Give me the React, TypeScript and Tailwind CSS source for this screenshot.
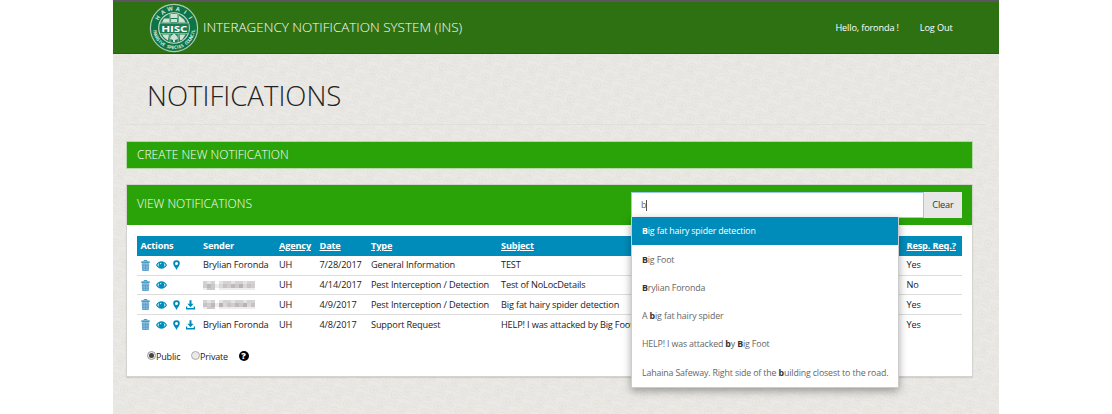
import React from "react";

const BLUE = "#008cba";

function Swirls() {
  return (
    <svg className="absolute inset-0 h-full w-full" aria-hidden="true">
      <defs>
        <pattern id="swirl" width="22" height="20" patternUnits="userSpaceOnUse" patternTransform="rotate(14)">
          <g fill="none" stroke="#e0ded8" strokeWidth="0.8">
            <circle cx="6" cy="5" r="1.300" />
            <circle cx="6" cy="5" r="3.900" />
            <circle cx="17" cy="15" r="1.300" />
            <circle cx="17" cy="15" r="3.900" />
            <path d="M11 5c2-4 7-4 11 0M0 15c3-4 7-4 11 0M11 8c3-3 7-3 11 0M0 18c3-3 7-3 11 0M11 2c3-3 7-3 11 0M0 12c3-3 7-3 11 0" />
          </g>
        </pattern>
      </defs>
      <rect width="100%" height="100%" fill="url(#swirl)" />
    </svg>
  );
}

function RingText({ text, radius, from, to, size, bottom }: { text: string; radius: number; from: number; to: number; size: number; bottom?: boolean }) {
  const step = (to - from) / (text.length - 1);
  return (
    <>
      {text.split("").map((ch, i) => {
        if (ch === " ") return null;
        const a = from + step * i;
        const rad = (a * Math.PI) / 180;
        const x = 25 + radius * Math.sin(rad);
        const y = 25 - radius * Math.cos(rad);
        return (
          <text key={i} x="0" y={size * 0.36} textAnchor="middle" fontSize={size} fontWeight="700" fill="#d5e8dc" transform={`translate(${x} ${y}) rotate(${bottom ? a - 180 : a})`}>
            {ch}
          </text>
        );
      })}
    </>
  );
}

function Logo() {
  return (
    <svg width="50" height="50" viewBox="0 0 50 50" className="shrink-0">
      <circle cx="25" cy="25" r="23.600" fill="#0e7446" stroke="#a9cdb4" strokeWidth="1.200" />
      <circle cx="25" cy="25" r="15.300" fill="#1a7b50" stroke="#c7decd" strokeWidth="1.100" />
      <g fill="#cfe3d5">
        <path d="M15 15.500h5.500v4H13zM21.500 11h7v4h-7zM22 16h6v3h-6zM30 12.500l5 4 1.500 3H30z" />
        <path d="M13 31.500h7l-1 6-4-3zM22 33l3-2.500 3 2.500 1 3-3 1v2h-2v-2l-3-1zM30.500 31.500h6l-3 5-2.500 1z" />
      </g>
      <path d="M21 11v28M29.200 11v28" stroke="#cfe3d5" strokeWidth="0.600" />
      <rect x="11" y="20" width="28.500" height="10.600" fill="#1a7b50" />
      <path d="M11 20h28.500M11 30.600h28.500" stroke="#cfe3d5" strokeWidth="0.600" />
      <text x="25.300" y="28.700" textAnchor="middle" fontSize="9.500" fontWeight="700" fill="#fff" textLength="26" lengthAdjust="spacingAndGlyphs">HISC</text>
      <RingText text="HAWAII" radius={19.400} from={-58} to={58} size={5.800} />
      <RingText text="INVASIVE SPECIES COUNCIL" radius={19.400} from={262} to={98} size={4.600} bottom />
    </svg>
  );
}

function TrashIcon() {
  return (
    <svg width="9" height="11" viewBox="0 0 9 11">
      <path d="M3 1.500V.5h3v1" fill="none" stroke="#3f93c4" strokeWidth=".9" />
      <path d="M.3 1.400h8.400v1.500H.3z" fill="#2f92c0" />
      <path d="M1 3.500h7L7.600 10.900H1.400z" fill="#a3cbe8" />
      <path d="M1.200 3.700h6.600L7.400 10.500H1.600zM2.900 4v6.500M4.500 4v6.500M6.100 4v6.500M1.300 5.800h6.400M1.400 8.200h6.200" fill="none" stroke="#3f8fc2" strokeWidth=".6" />
    </svg>
  );
}

function EyeIcon() {
  return (
    <svg width="11" height="8" viewBox="0 0 11 8">
      <path fillRule="evenodd" fill={BLUE} d="M0 4C1.400 1.500 3.300.3 5.500.3S9.600 1.500 11 4C9.600 6.500 7.700 7.700 5.500 7.700S1.400 6.500 0 4zM1.300 4c.6 1 1.500 1.800 2.400 2.200a3 3 0 0 1-.1-4.300C2.700 2.300 1.900 3.100 1.300 4zm8.400 0c-.6-.9-1.400-1.700-2.300-2.100a3 3 0 0 1-.1 4.300C8.200 5.800 9.100 5 9.700 4zM5.500 1.700a1.500 1.500 0 0 0-1.600 1.600c.8.100 1.600-.7 1.600-1.600z" />
    </svg>
  );
}

function PinIcon() {
  return (
    <svg width="7" height="10" viewBox="0 0 7 10">
      <path fillRule="evenodd" fill={BLUE} d="M3.500.2A3.200 3.200 0 0 0 .2 3.400C.2 5.600 2.300 7 3.500 9.900 4.700 7 6.800 5.600 6.800 3.400A3.200 3.200 0 0 0 3.500.2zm0 1.700a1.500 1.500 0 1 1 0 3 1.500 1.500 0 0 1 0-3z" />
    </svg>
  );
}

function DownloadIcon() {
  return (
    <svg width="9" height="10" viewBox="0 0 9 10">
      <path fill={BLUE} d="M3.500.2h2v3.600h2.100L4.500 7.200 1.400 3.800h2.100zM0 6.500h1.300v1.600h6.400V6.500H9v3.100H0z" />
    </svg>
  );
}

function MaskedName({ seed }: { seed: number }) {
  const shades = ["bg-[#bdb9ba]", "bg-[#cfcdcd]", "bg-[#c6c2c7]", "bg-[#d8d6d6]", "bg-[#b5b3b4]", "bg-[#cac8c8]"];
  return (
    <div className="flex h-[9px] w-[52px] items-stretch blur-[0.6px]">
      {Array.from({ length: 13 }, (_, i) => (
        <div key={i} className="flex w-1 flex-col">
          <span className={"h-[3px] " + (i === 3 ? "bg-white" : i % 3 === 1 ? "bg-[#e4e3e3]" : "bg-[#d4d2d3]")} />
          <span className={"h-1 " + (i === 3 ? "bg-[#ececec]" : shades[(i * 5 + seed) % 6])} />
          <span className={"h-[2px] " + (i > 0 && i < 3 ? "bg-[#cbc9ca]" : i === 3 ? "bg-white" : "bg-[#ececec]")} />
        </div>
      ))}
    </div>
  );
}

const grid = "grid grid-cols-[62.500px_76px_40.500px_51.500px_130px_405.500px_55px] pl-[3.500px]";

type Row = { actions: number; sender: string; date: string; type: string; subject: string; resp: string };

const rows: Row[] = [
  { actions: 3, sender: "Brylian Foronda", date: "7/28/2017", type: "General Information", subject: "TEST", resp: "Yes" },
  { actions: 2, sender: "", date: "4/14/2017", type: "Pest Interception / Detection", subject: "Test of NoLocDetails", resp: "No" },
  { actions: 4, sender: "", date: "4/9/2017", type: "Pest Interception / Detection", subject: "Big fat hairy spider detection", resp: "Yes" },
  { actions: 4, sender: "Brylian Foronda", date: "4/8/2017", type: "Support Request", subject: "HELP! I was attacked by Big Foot", resp: "Yes" },
];

const suggestions = [
  "*B*ig fat hairy spider detection",
  "*B*ig Foot",
  "*B*rylian Foronda",
  "A *b*ig fat hairy spider",
  "HELP! I was attacked *b*y *B*ig Foot",
  "Lahaina Safeway. Right side of the *b*uilding closest to the road.",
];

function Marked({ text }: { text: string }) {
  return <>{text.split("*").map((part, i) => (i % 2 ? <b key={i} className="font-bold">{part}</b> : part))}</>;
}

function SearchBox() {
  return (
    <div className="relative flex h-[26px] w-[331px] font-normal">
      <div className="flex w-[293px] items-center border border-[#9ccbe8] bg-white pl-[9px] text-[9px] text-[#666]">
        b<span className="-ml-px h-[11px] w-px bg-[#555]" />
      </div>
      <button className="flex-1 bg-[#e7e7e7] text-[9.200px] tracking-[-0.15px] text-[#333]">Clear</button>
      <ul className="absolute top-[25px] left-0 z-10 w-[268px] border border-t-0 border-[#ccc] bg-white shadow-[0_3px_8px_rgba(0,0,0,0.35)]">
        {suggestions.map((s, i) => (
          <li
            key={s}
            className={
              "flex h-[28.300px] items-center pt-[1.500px] pl-2.5 text-[8.800px] tracking-[-0.14px] whitespace-nowrap " +
              (i === 0 ? "bg-[#008cba] text-white" : "text-[#666] [&_b]:text-[#333]")
            }
          >
            <span><Marked text={s} /></span>
          </li>
        ))}
      </ul>
    </div>
  );
}

export default function App() {
  return (
    <div className="flex h-[414px] w-[1112px] justify-center overflow-hidden bg-white font-['Open_Sans',sans-serif] text-[9.200px] tracking-[-0.16px] text-[#222]">
      <div className="relative h-full w-[886px] bg-[#ebe9e5]">
        <Swirls />
        <div className="relative flex flex-col">
          <header className="flex h-[54px] items-center border-t-2 border-b border-t-[#5d5560] border-b-[#276010] bg-[#2d7112] pr-[46.500px] pl-9 text-white">
            <Logo />
            <h1 className="ml-1 text-[13.450px] font-light tracking-normal whitespace-nowrap">INTERAGENCY NOTIFICATION SYSTEM (INS)</h1>
            <nav className="ml-auto flex gap-[21px]">
              <span>Hello, foronda !</span>
              <span>Log Out</span>
            </nav>
          </header>

          <h2 className="mx-[13px] flex h-[71px] items-center border-b border-[#e1dfda] pt-[14px] pl-[21px] text-[27.600px] font-light tracking-normal">NOTIFICATIONS</h2>

          <section className="mr-[26px] ml-[13px] mt-4 flex h-7 items-center border border-[#b4d8a8] bg-[#2aa308] pl-2.5 text-[12px] font-light tracking-normal text-white">
            CREATE NEW NOTIFICATION
          </section>

          <section className="mr-[26px] ml-[13px] mt-[15px] h-[193px] border border-[#d5d3cf] bg-white shadow-[0_1px_1px_rgba(0,0,0,0.1)]">
            <div className="flex h-10 items-center justify-between bg-[#2aa308] pr-2.5 pl-2.5 text-[12px] font-light tracking-normal text-white">
              <span className="pb-0.5">VIEW NOTIFICATIONS</span>
              <SearchBox />
            </div>
            <div className="mx-2.5 mt-[11px]">
              <div className={grid + " h-5 items-center bg-[#008cba] font-bold text-white"}>
                <span>Actions</span>
                <span>Sender</span>
                <span className="underline">Agency</span>
                <span className="underline">Date</span>
                <span className="underline">Type</span>
                <span className="underline">Subject</span>
                <span className="whitespace-nowrap underline">Resp. Req.?</span>
              </div>
              {rows.map((r, i) => (
                <div key={i} className={grid + " h-[19.700px] items-center whitespace-nowrap " + (i < 3 ? "border-b border-[#ddd]" : "")}>
                  <div className="grid grid-cols-[15px_17px_13px_9px] items-center">
                    <TrashIcon />
                    <EyeIcon />
                    {r.actions > 2 && <PinIcon />}
                    {r.actions > 3 && <DownloadIcon />}
                  </div>
                  {r.sender ? <span>{r.sender}</span> : <MaskedName seed={i} />}
                  <span>UH</span>
                  <span>{r.date}</span>
                  <span>{r.type}</span>
                  <span>{r.subject}</span>
                  <span>{r.resp}</span>
                </div>
              ))}
            </div>
            <div className="mt-[13px] flex h-4 items-center pl-5">
              <span className="flex h-[9px] w-[9px] items-center justify-center rounded-full border border-[#999] bg-[#eee]">
                <span className="h-[5px] w-[5px] rounded-full bg-[#444]" />
              </span>
              <span className="w-[35px] pt-px text-[9px]">Public</span>
              <span className="h-[9px] w-[9px] rounded-full border border-[#aaa] bg-[#e9e9e9]" />
              <span className="w-[38.500px] pt-px text-[9px]">Private</span>
              <span className="flex h-2.5 w-2.5 items-center justify-center rounded-full bg-black text-[9px] font-extrabold text-white">?</span>
            </div>
          </section>
        </div>
      </div>
    </div>
  );
}
